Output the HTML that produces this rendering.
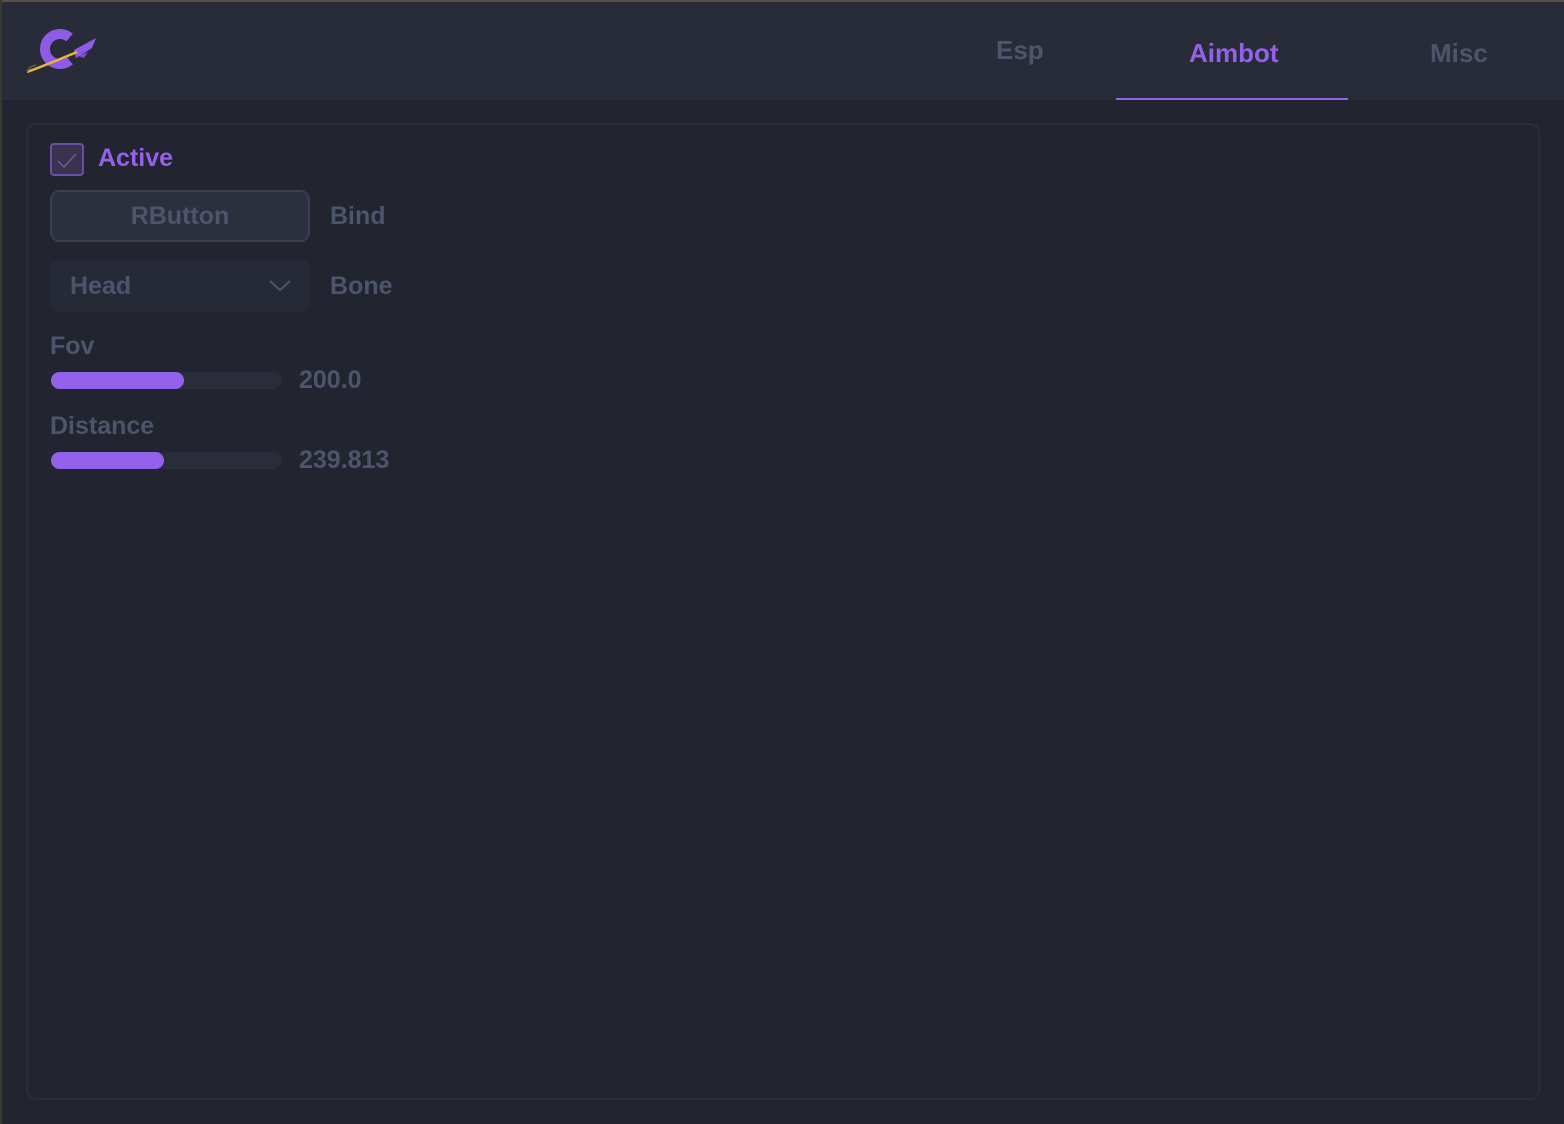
<!DOCTYPE html>
<html><head><meta charset="utf-8">
<style>
*{margin:0;padding:0;box-sizing:border-box}
html,body{width:1564px;height:1124px;overflow:hidden;background:#22252f;font-family:"Liberation Sans",sans-serif;font-weight:bold}
.top{position:absolute;left:0;top:0;width:1564px;height:2px;background:#5a5240}
.left{position:absolute;left:0;top:0;width:2px;height:1124px;background:#3a3a30}
.hdr{position:absolute;left:2px;top:2px;width:1562px;height:98px;background:#282c39}
.tab{position:absolute;font-size:26px;color:#4d556d}
.ul{position:absolute;left:1116px;top:98px;width:232px;height:2px;background:#9461ea}
.panel{position:absolute;left:26px;top:123px;width:1514px;height:977px;border:2px solid #2a2e3a;border-radius:10px;background:#22252f}
.lbl{position:absolute;font-size:25px;color:#4d556d}
.cb{position:absolute;left:50px;top:143px;width:34px;height:33px;border:2px solid #6a4fa6;border-radius:4px;background:#3a3350}
.btn{position:absolute;left:50px;top:190px;width:260px;height:52px;border:2px solid #3a4052;border-radius:10px;background:#2b2f3e;color:#4d556d;font-size:25px;text-align:center;line-height:48px}
.sel{position:absolute;left:50px;top:260px;width:260px;height:52px;border-radius:10px;background:#262a37;color:#4d556d;font-size:25px;line-height:52px;padding-left:20px}
.track{position:absolute;left:51px;width:231px;height:17px;border-radius:9px;background:#292d3a}
.fill{height:100%;border-radius:9px;background:#9461ea}
</style></head><body>
<div class="hdr"></div>
<div class="top"></div><div class="left"></div>
<svg style="position:absolute;left:24px;top:24px" width="78" height="54" viewBox="0 0 78 54">
 <path d="M45.6 13.5 A15 15 0 1 0 45.6 36.5" stroke="#8f5be6" stroke-width="10" fill="none"/>
 <path d="M50 26 L72 14 L68 24 L52 34 Z" fill="#8f5be6"/>
 <path d="M54 32 L64 28 L60 34 Z" fill="#7a4fd0"/>
 <path d="M3 48 C14 44 34 36 53 28" stroke="#e6b93a" stroke-width="2.5" fill="none"/>
 <path d="M3 48 C4 44 8 42 12 41" stroke="#6a5a40" stroke-width="1.5" fill="none"/>
</svg>
<div class="tab" style="left:996px;top:35px">Esp</div>
<div class="tab" style="left:1189px;top:38px;color:#9461ea">Aimbot</div>
<div class="tab" style="left:1430px;top:38px">Misc</div>
<div class="ul"></div>
<div class="panel"></div>
<div class="cb"><svg width="30" height="29" viewBox="0 0 30 29"><path d="M6 16 L12 22 L24 9" stroke="#6a5a9a" stroke-width="1.5" fill="none"/></svg></div>
<div class="lbl" style="left:98px;top:144px;color:#9461ea">Active</div>
<div class="btn">RButton</div>
<div class="lbl" style="left:330px;top:202px">Bind</div>
<div class="sel">Head<svg style="position:absolute;left:218px;top:18px" width="24" height="16" viewBox="0 0 24 16"><path d="M2 3 L12 12 L22 3" stroke="#4d556d" stroke-width="2" fill="none"/></svg></div>
<div class="lbl" style="left:330px;top:272px">Bone</div>
<div class="lbl" style="left:50px;top:332px">Fov</div>
<div class="track" style="top:372px"><div class="fill" style="width:133px"></div></div>
<div class="lbl" style="left:299px;top:366px">200.0</div>
<div class="lbl" style="left:50px;top:412px">Distance</div>
<div class="track" style="top:452px"><div class="fill" style="width:113px"></div></div>
<div class="lbl" style="left:299px;top:446px">239.813</div>
</body></html>
